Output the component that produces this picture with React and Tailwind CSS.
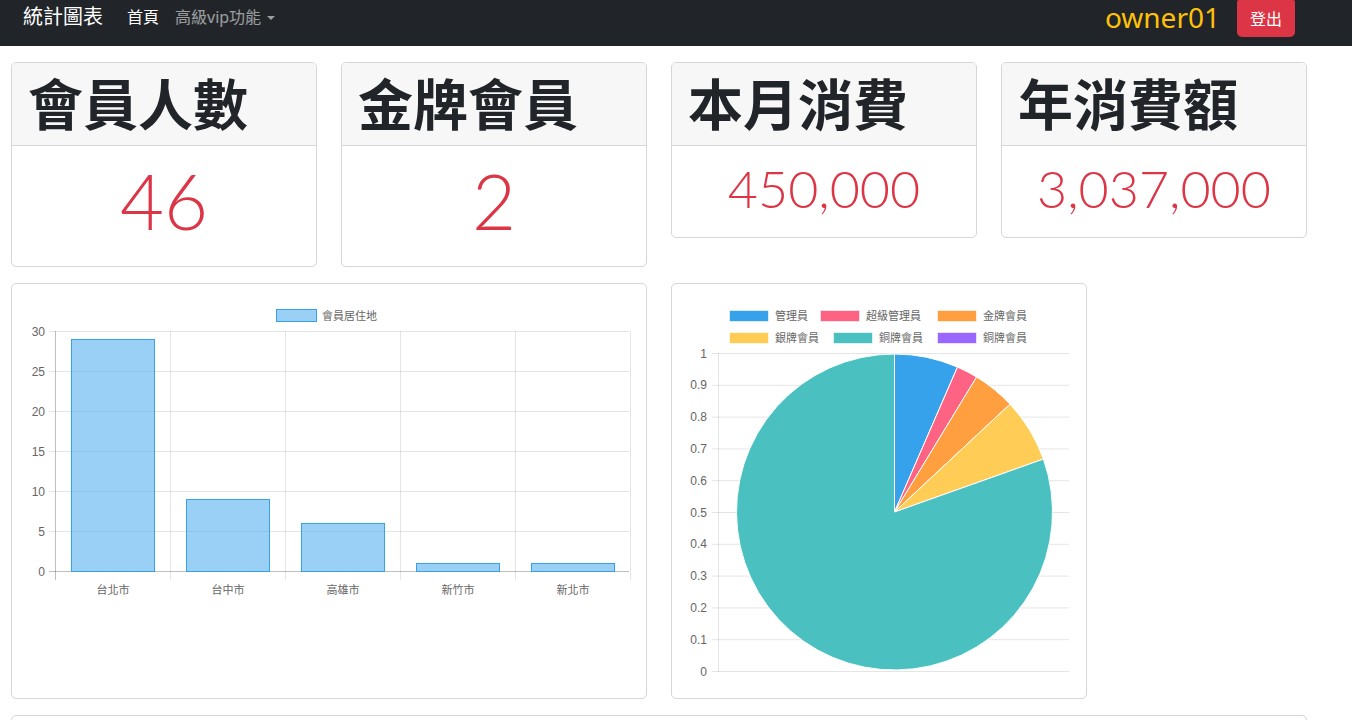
import React from 'react'

const cjk = { fontFamily: '"Noto Sans", "Noto Sans CJK TC", sans-serif' }
const chartFont = '"Liberation Sans", "Noto Sans CJK TC", sans-serif'

const stats = [
  { title: '會員人數', value: '46', big: true },
  { title: '金牌會員', value: '2', big: true },
  { title: '本月消費', value: '450,000', big: false },
  { title: '年消費額', value: '3,037,000', big: false },
]

const bars = [
  { label: '台北市', v: 29 },
  { label: '台中市', v: 9 },
  { label: '高雄市', v: 6 },
  { label: '新竹市', v: 1 },
  { label: '新北市', v: 1 },
]

const slices = [
  { label: '管理員', v: 3, color: '#36a2eb' },
  { label: '超級管理員', v: 1, color: '#ff6384' },
  { label: '金牌會員', v: 2, color: '#ff9f40' },
  { label: '銀牌會員', v: 3, color: '#ffcd56' },
  { label: '銅牌會員', v: 37, color: '#4bc0c0' },
  { label: '銅牌會員', v: 0, color: '#9966ff' },
]

function Navbar() {
  return (
    <nav className="h-[46px] bg-[#212529] flex items-start pl-[23px] pr-[57px]" style={cjk}>
      <span className="mt-[2px] text-[20px] leading-[30px] text-white">統計圖表</span>
      <a className="ml-[24px] mt-[5px] text-[16px] leading-[24px] text-white">首頁</a>
      <a className="ml-[16px] mt-[5px] text-[16px] leading-[24px] text-white/55 flex items-center">
        高級vip功能
        <span className="ml-[6px] mt-[1px] w-0 h-0 border-x-[4px] border-x-transparent border-t-[4px] border-t-white/55" />
      </a>
      <div className="ml-auto flex items-start">
        <span className="text-[28px] leading-[32px] text-[#ffc107] mt-[1px]">owner01</span>
        <button className="ml-[17px] w-[58px] h-[37px] bg-[#dc3545] text-white text-[16px] rounded-b-[5px] rounded-t-[2px]">
          登出
        </button>
      </div>
    </nav>
  )
}

function StatCard({ title, value, big }) {
  return (
    <div className="w-[306px] border border-[#d6d6d6] rounded-[5px] bg-white overflow-hidden">
      <div className="h-[83px] bg-[#f7f7f7] border-b border-[#d6d6d6] px-[16px] flex items-center">
        <h1 className="text-[55px] leading-[60px] font-bold text-[#212529]" style={cjk}>{title}</h1>
      </div>
      <div className={big ? 'h-[120px] flex items-center justify-center pb-[10px]' : 'h-[91px] flex items-center justify-center pb-[8px]'}>
        <span
          className={big ? 'text-[76px] leading-none font-light text-[#dc3545]' : 'text-[52px] leading-none font-light text-[#dc3545]'}
          style={{ fontFamily: 'Lato, "Noto Sans", sans-serif' }}
        >
          {value}
        </span>
      </div>
    </div>
  )
}

function BarChart() {
  const yTicks = [0, 5, 10, 15, 20, 25, 30]
  const y0 = 571.5
  return (
    <svg width="634" height="414" className="block">
      <g transform="translate(-12,-284)" fontFamily={chartFont} fill="#666">
        <rect x="276.5" y="309.5" width="40" height="12" fill="rgba(54,162,235,0.5)" stroke="#36a2eb" />
        <text x="322" y="319.5" fontSize="11">會員居住地</text>
        {yTicks.map((t) => {
          const y = y0 - t * 8
          return (
            <g key={t}>
              <line x1="49" x2="629" y1={y} y2={y} stroke={t === 0 ? 'rgba(0,0,0,0.25)' : 'rgba(0,0,0,0.1)'} />
              <text x="45" y={y + 4} fontSize="12" textAnchor="end">{t}</text>
            </g>
          )
        })}
        {[0, 1, 2, 3, 4, 5].map((i) => (
          <line
            key={i}
            x1={55.5 + 115 * i}
            x2={55.5 + 115 * i}
            y1="331"
            y2="580"
            stroke={i === 0 ? 'rgba(0,0,0,0.25)' : 'rgba(0,0,0,0.1)'}
          />
        ))}
        {bars.map((b, i) => (
          <g key={b.label}>
            <rect
              x={71.5 + 115 * i}
              y={y0 - b.v * 8}
              width="83"
              height={b.v * 8}
              fill="rgba(54,162,235,0.5)"
              stroke="#36a2eb"
            />
            <text x={113 + 115 * i} y="594" fontSize="11" textAnchor="middle">{b.label}</text>
          </g>
        ))}
      </g>
    </svg>
  )
}

function PieChart() {
  const cx = 894.5
  const cy = 512
  const r = 158
  const total = slices.reduce((s, x) => s + x.v, 0)
  let acc = 0
  const paths = slices.map((s) => {
    const a0 = (acc / total) * Math.PI * 2
    acc += s.v
    const a1 = (acc / total) * Math.PI * 2
    if (s.v === 0) return null
    const x0 = cx + r * Math.sin(a0)
    const yy0 = cy - r * Math.cos(a0)
    const x1 = cx + r * Math.sin(a1)
    const yy1 = cy - r * Math.cos(a1)
    const large = a1 - a0 > Math.PI ? 1 : 0
    return { d: `M${cx},${cy} L${x0},${yy0} A${r},${r} 0 ${large} 1 ${x1},${yy1} Z`, color: s.color }
  })
  const legend = [
    { x: 729, y: 310, tx: 775 },
    { x: 820, y: 310, tx: 866 },
    { x: 937, y: 310, tx: 983 },
    { x: 729, y: 332, tx: 775 },
    { x: 833, y: 332, tx: 879 },
    { x: 937, y: 332, tx: 983 },
  ]
  const ticks = [1, 0.9, 0.8, 0.7, 0.6, 0.5, 0.4, 0.3, 0.2, 0.1, 0]
  return (
    <svg width="414" height="414" className="block">
      <g transform="translate(-672,-284)" fontFamily={chartFont} fill="#666">
        {slices.map((s, i) => (
          <g key={i}>
            <rect x={legend[i].x + 0.5} y={legend[i].y + 0.5} width="39" height="11" fill={s.color} stroke="rgba(255,255,255,0.6)" />
            <text x={legend[i].tx} y={legend[i].y + 10} fontSize="11">{s.label}</text>
          </g>
        ))}
        {ticks.map((t, i) => {
          const y = 353.5 + i * 31.8
          return (
            <g key={t}>
              <line x1="712" x2="1069" y1={y} y2={y} stroke="rgba(0,0,0,0.1)" />
              <text x="707" y={y + 4} fontSize="12" textAnchor="end">{t}</text>
            </g>
          )
        })}
        <line x1="718.5" x2="718.5" y1="353" y2="672" stroke="rgba(0,0,0,0.1)" />
        {paths.map((p, i) => p && <path key={i} d={p.d} fill={p.color} stroke="#fff" strokeWidth="1" />)}
      </g>
    </svg>
  )
}

export default function App() {
  return (
    <div className="min-h-screen bg-white">
      <Navbar />
      <div className="pl-[11px] pt-[16px] flex flex-col gap-[16px]">
        <div className="flex items-start gap-[24px]">
          {stats.map((s) => (
            <StatCard key={s.title} {...s} />
          ))}
        </div>
        <div className="flex gap-[24px]">
          <div className="w-[636px] border border-[#d6d6d6] rounded-[5px] overflow-hidden">
            <BarChart />
          </div>
          <div className="w-[416px] h-[416px] border border-[#d6d6d6] rounded-[5px] overflow-hidden">
            <PieChart />
          </div>
        </div>
        <div className="w-[1296px] h-[120px] border border-[#d6d6d6] rounded-[5px]" />
      </div>
    </div>
  )
}
